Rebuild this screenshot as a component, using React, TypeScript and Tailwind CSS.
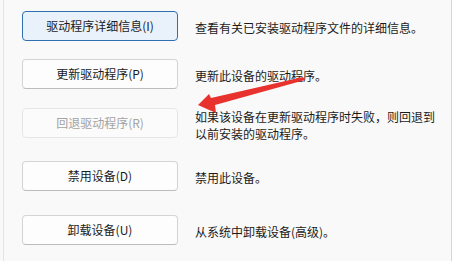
import React from "react";

type Row = {
  label: string;
  desc: string[];
  variant: "focus" | "normal" | "disabled";
  gap: string;
};

const rows: Row[] = [
  { label: "驱动程序详细信息(I)", desc: ["查看有关已安装驱动程序文件的详细信息。"], variant: "focus", gap: "mt-[11px]" },
  { label: "更新驱动程序(P)", desc: ["更新此设备的驱动程序。"], variant: "normal", gap: "mt-[18px]" },
  {
    label: "回退驱动程序(R)",
    desc: ["如果该设备在更新驱动程序时失败，则回退到", "以前安装的驱动程序。"],
    variant: "disabled",
    gap: "mt-[19px]",
  },
  { label: "禁用设备(D)", desc: ["禁用此设备。"], variant: "normal", gap: "mt-[23px]" },
  { label: "卸载设备(U)", desc: ["从系统中卸载设备(高级)。"], variant: "normal", gap: "mt-[24px]" },
];

const btnClass = {
  focus: "bg-[#e9f2fb] border-[#2f6fb0] text-[#1b1b1b]",
  normal: "bg-[#fdfdfd] border-[#d4d4d4] border-b-[#bcbcbc] text-[#1b1b1b]",
  disabled: "bg-[#fbfbfb] border-[#e6e6e6] text-[#a3a3a3]",
};

const App = () => {
  return (
    <div
      className="relative flex h-[261px] w-[454px] overflow-hidden bg-[#f9f9f9] text-[12px] text-[#1b1b1b]"
      style={{ fontFamily: '"Noto Sans CJK SC", "Noto Sans", sans-serif' }}
    >
      <div className="w-[4px] border-r border-[#e3e3e3]" />
      <div className="flex flex-1 flex-col pl-[18px]">
        {rows.map((row) => (
          <div key={row.label} className={`flex h-[30px] items-center ${row.gap}`}>
            <button
              className={`flex h-[30px] w-[156px] shrink-0 items-center justify-center rounded-[4px] border ${btnClass[row.variant]}`}
            >
              {row.label}
            </button>
            <div className="ml-[17px] pt-[3px] leading-[17px]">
              {row.desc.map((line) => (
                <div key={line} className="whitespace-nowrap">
                  {line}
                </div>
              ))}
            </div>
          </div>
        ))}
      </div>
      <div className="w-[3px] border-l border-[#d6d6d6] bg-white" />
      <svg className="pointer-events-none absolute left-0 top-0" width="454" height="261">
        <polygon
          points="303,77 305,80 215,105 216,113 198,105 209,94 211,98"
          fill="#e8322e"
        />
      </svg>
    </div>
  );
};

export default App;
